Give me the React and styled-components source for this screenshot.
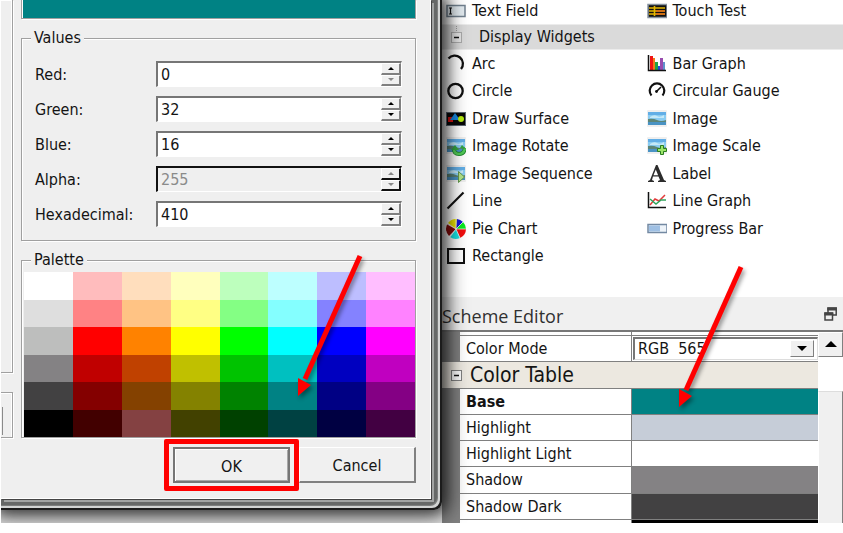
import React from "react";
import styled, { createGlobalStyle, css } from "styled-components";

const UI_FONT = '"DejaVu Sans Condensed", "Noto Sans", sans-serif';

const GlobalStyle = createGlobalStyle`
  *, *::before, *::after { box-sizing: border-box; }
  body { margin: 0; background: #fff; color: #141414; font: 16px/20px ${UI_FONT}; }
  button, input, select { font: inherit; color: inherit; border-radius: 0; }
`;

const Workspace = styled.main`
  display: grid;
  grid-template-columns: 441fr 401fr;
  margin-left: 1px;
  overflow: hidden;
  background: #e4e4e4;
`;

/* ---------- colour dialog ---------- */

const DialogFrame = styled.section`
  position: relative;
  z-index: 1;
  align-self: start;
  padding: 0 11px 11px 0;
  border-radius: 0 0 8px 0;
  background: #666867;
  box-shadow:
    inset -2px -2px #1c1c1c,
    inset -4px -4px #d2d4d3,
    inset -5px -5px #7c7e7d,
    0 0 20px 6px rgba(0, 0, 0, 0.6),
    0 0 14px 3px rgba(0, 0, 0, 0.45);
`;

const DialogBody = styled.form`
  display: grid;
  grid-template-columns: 12px 1fr;
  column-gap: 8px;
  padding: 0 14px 15px 0;
  background: #efefef;
  border-right: 1px solid #fff;
  border-bottom: 1px solid #fff;
  box-shadow: 1px 1px #444, 3px 3px #a2a4a3;
`;

const SideColumn = styled.div`
  display: flex;
  flex-direction: column;
  gap: 19px;
`;

const SideBox = styled.div`
  height: ${(p) => (p.$tall ? 373 : 46)}px;
  border: 1px solid #a0a0a0;
  border-left: 0;
  border-top-width: ${(p) => (p.$tall ? 0 : 1)}px;
  box-shadow: 1px 1px #fff, inset -1px 1px #fff;
  padding-top: 14px;
`;

const SideField = styled.div`
  width: 2px;
  height: 28px;
  border-right: 1px solid #8a8a8a;
`;

const DialogContent = styled.div`
  display: flex;
  flex-direction: column;
  gap: 9px;
`;

const Preview = styled.div`
  height: 19px;
  border: 1px solid #a0a0a0;
  border-top: 0;
  padding-left: 1px;
  background: #008284;
  box-shadow: inset 1px 0 #fff, 1px 1px #fff;
`;

const Group = styled.fieldset`
  min-width: 0;
  margin: 0;
  padding: ${(p) => (p.$flush ? "2px 0 0 2px" : "13px 13px 13px 13px")};
  border: 1px solid #a0a0a0;
  box-shadow: 1px 1px #fff, inset 1px 1px #fff;
`;

const GroupTitle = styled.legend`
  margin-left: ${(p) => (p.$flush ? 7 : -4)}px;
  padding: 0 3px;
  background: #efefef;
`;

const Fields = styled.div`
  display: grid;
  row-gap: 9px;
`;

const FieldRow = styled.div`
  display: grid;
  grid-template-columns: 121px 1fr;
  align-items: start;
  height: 26px;
`;

const FieldLabel = styled.label`
  padding-top: 1px;
  line-height: 26px;
`;

const SpinBox = styled.div`
  display: flex;
  height: 26px;
  border: 1px solid;
  border-width: 2px 1px 1px 2px;
  border-color: ${(p) => (p.$off ? "#111 #fff #fff #111" : "#767676 #fff #fff #767676")};
  background: ${(p) => (p.$off ? "#efefef" : "#fff")};
`;

const SpinInput = styled.input`
  flex: 1;
  min-width: 0;
  border: 0;
  padding: 1px 0 0 3px;
  background: transparent;
  outline: none;
  &:disabled { color: #8a8a8a; }
`;

const SpinButtons = styled.div`
  display: grid;
  grid-template-rows: 1fr 1fr;
  width: 20px;
`;

const bevel = css`
  border: 1px solid;
  border-color: #fff #808080 #808080 #fff;
  background: #f0f0f0;
`;

const SpinButton = styled.button`
  ${bevel}
  display: grid;
  place-items: center;
  min-height: 0;
  padding: 0;
  border-width: 1px 2px 2px 1px;
  border-right-color: ${(p) => (p.$off ? "#111" : "#808080")};
  border-bottom-color: ${(p) => (p.$off ? "#111" : "#808080")};
`;

const Swatches = styled.div`
  position: relative;
  display: grid;
  grid-template-columns: repeat(8, 1fr);
  grid-template-rows: repeat(6, 1fr);
  height: 165px;
`;

const Swatch = styled.button`
  min-height: 0;
  padding: 0;
  border: 0;
  background: ${(p) => p.$color};
`;

const Actions = styled.div`
  display: flex;
  justify-content: flex-end;
  gap: 9px;
`;

const ActionSlot = styled.div`
  position: relative;
  width: 117px;
`;

const PushButton = styled.button`
  ${bevel}
  width: 100%;
  height: 36px;
  padding: 3px 0 0;
  border-width: 1px 2px 2px 1px;
  ${(p) => p.$default && css`
    border: 2px solid #767676;
    box-shadow: inset 1px 1px #fff, inset -1px -1px #a8a8a8;
  `}
`;

const Callout = styled.span`
  position: absolute;
  inset: -8px -9px;
  border: 5px solid #f00;
  border-radius: 2px;
  pointer-events: none;
`;

const ArrowSvg = styled.svg`
  position: absolute;
  top: ${(p) => p.$top}px;
  right: ${(p) => p.$right}px;
  z-index: 2;
  overflow: visible;
  pointer-events: none;
  filter: drop-shadow(2px 3px 2px rgba(0, 0, 0, 0.4));
`;

const PointerArrow = ({ top, right }) => (
  <ArrowSvg $top={top} $right={right} width="64" height="142" viewBox="0 0 64 142" aria-hidden="true">
    <path d="M62 1 7 124" stroke="#f00" strokeWidth="5" />
    <path d="M0 123 13 130 0 141Z" fill="#f00" />
  </ArrowSvg>
);

/* ---------- right-hand panels ---------- */

const SidePane = styled.div`
  position: relative;
  min-width: 0;
  display: flex;
  flex-direction: column;
`;

const WidgetPanel = styled.section`
  height: 297px;
  background: #fff;
`;

const WidgetGrid = styled.div`
  display: grid;
  grid-template-columns: 1fr 1fr;
  grid-auto-rows: 1fr;
  height: ${(p) => p.$height}px;
`;

const WidgetItem = styled.button`
  display: flex;
  align-items: center;
  gap: 6px;
  min-width: 0;
  padding: 0 0 0 4px;
  border: 0;
  background: transparent;
  text-align: left;
  white-space: nowrap;
  svg { flex: none; }
`;

const SectionHeader = styled.button`
  display: flex;
  align-items: center;
  gap: 17px;
  width: 100%;
  height: 26px;
  margin-top: 3px;
  padding: 0 0 0 8px;
  border: 0;
  border-bottom: 1px solid #ececec;
  border-top: 1px solid #ececec;
  background: #dadada;
  text-align: left;
`;

const DockTitle = styled.header`
  display: flex;
  align-items: center;
  justify-content: space-between;
  height: 33px;
  padding: 5px 6px 0 0;
  background: #f0f0f0;
  color: #303030;
`;

const DockHeading = styled.h2`
  margin: 0;
  font: 400 18px/24px "Open Sans", sans-serif;
`;

const IconButton = styled.button`
  display: grid;
  padding: 0 0 4px;
  border: 0;
  background: none;
`;

const EditorBody = styled.div`
  display: flex;
  height: 193px;
  overflow: hidden;
  border-top: 2px solid #777;
  background: #fff;
`;

const PropertyTable = styled.table`
  flex: 1;
  min-width: 0;
  height: 193px;
  table-layout: fixed;
  border-spacing: 0;
  background: #fff;
`;

const GutterCol = styled.col`width: 17px;`;
const NameCol = styled.col`width: 172px;`;

const Row = styled.tr`height: ${(p) => p.$height || 26}px;`;

const Gutter = styled.td`
  padding: 0;
  background: #808080;
`;

const NameCell = styled.th`
  padding: 1px 0 0 6px;
  border-bottom: 1px solid #808080;
  border-left: 1px solid #808080;
  font-weight: ${(p) => (p.$bold ? 700 : 400)};
  text-align: left;
`;

const ValueCell = styled.td`
  padding: 0;
  border-bottom: 1px solid #808080;
  border-left: 1px solid #808080;
  background: ${(p) => p.$color || "#fff"};
`;

const CategoryCell = styled.th`
  padding: 0;
  border-bottom: 1px solid #808080;
  background: #ece8e0;
  font-weight: 400;
  text-align: left;
`;

const CategoryLabel = styled.div`
  display: flex;
  align-items: center;
  gap: 8px;
  padding-left: 8px;
  font-size: 21px;
  line-height: 24px;
`;

const Combo = styled.div`
  position: relative;
  display: flex;
  height: 23px;
  margin-left: 1px;
  border: 1px solid;
  border-width: 2px 1px 1px 2px;
  border-color: #767676 #ddd #ddd #767676;
`;

const ComboSelect = styled.select`
  flex: 1;
  min-width: 0;
  appearance: none;
  padding: 0 0 0 3px;
  border: 0;
  background: #fff;
  outline: none;
  white-space: pre;
`;

const ComboArrow = styled.span`
  ${bevel}
  position: absolute;
  top: 1px;
  right: 3px;
  display: grid;
  place-items: center;
  width: 24px;
  height: 17px;
  pointer-events: none;
`;

const Scrollbar = styled.div`
  display: flex;
  flex-direction: column;
  width: 25px;
  background: #fff;
`;

const ScrollButton = styled.button`
  ${bevel}
  display: grid;
  place-items: center;
  height: 25px;
  margin-bottom: 34px;
  padding: 0 0 2px;
`;

const ScrollThumb = styled.div`
  ${bevel}
  flex: 1;
  border-top-color: #ddd;
  border-bottom: 0;
`;

/* ---------- icons ---------- */

const Icon = ({ children }) => (
  <svg width="20" height="20" viewBox="0 0 20 20" fill="none" aria-hidden="true">{children}</svg>
);

const Landscape = () => (
  <>
    <rect x="0" y="1" width="20" height="17" rx="1" fill="#efefef" />
    <rect x="1" y="3" width="18" height="13" fill="#8accf2" />
    <path d="M1 3h18v3H1z" fill="#62aee6" />
    <path d="M3 8q4-3 7-1t7-1v3H3z" fill="#c5e8f7" />
    <path d="M1 10q5-1 9 1t9 0v3H1z" fill="#5d8577" />
    <path d="M1 13h18v3H1z" fill="#4a93c4" />
  </>
);

const icons = {
  textField: (
    <Icon>
      <rect x="1" y="4.500" width="18" height="11" fill="#e3ebf0" stroke="#71808e" strokeWidth="1.500" />
      <path d="M3 7h1l.5.5.5-.5h1M3 13h1l.5-.5.5.5h1M4.500 7v6" stroke="#111" strokeWidth="1.200" />
    </Icon>
  ),
  touchTest: (
    <Icon>
      <rect x="1" y="3.500" width="19" height="13" fill="#111" stroke="#8793a0" strokeWidth="1.500" />
      <path d="M2 7h16M2 10h16M2 13h16" stroke="#e6b800" strokeWidth="1.500" />
      <path d="M7.500 5v10" stroke="#e6b800" strokeWidth="1.600" />
      <path d="M9 10h9M9 13h9" stroke="#d8661a" strokeWidth="1.500" />
    </Icon>
  ),
  arc: <Icon><path d="M2.500 4.500A7.300 7.300 0 0 1 15 15" stroke="#111" strokeWidth="2.300" /></Icon>,
  circle: <Icon><circle cx="9.500" cy="10" r="7.200" stroke="#111" strokeWidth="2.300" /></Icon>,
  drawSurface: (
    <Icon>
      <rect x="0.500" y="3.500" width="19" height="13" fill="#080808" stroke="#5d6873" />
      <rect x="2" y="8" width="5" height="5" fill="#e01212" />
      <path d="M4 11 9 4l5 7z" fill="#168be4" />
      <circle cx="15" cy="10" r="3" fill="#b8ef12" />
    </Icon>
  ),
  image: <Icon><Landscape /></Icon>,
  imageRotate: (
    <Icon>
      <Landscape />
      <path d="M8 13q0 5 5 5t6-6" stroke="#1d832b" strokeWidth="4" />
      <path d="M8 13q0 5 5 5t6-6" stroke="#51c957" strokeWidth="2.500" />
      <path d="m5 14 4-5 4 5z" fill="#34a540" />
      <path d="m14 12 2-3 4 4z" fill="#34a540" />
    </Icon>
  ),
  imageSequence: (
    <Icon><Landscape /><path d="m12.500 7.500 6 5.500-6 5.500z" fill="#b4e58b" stroke="#63984b" /></Icon>
  ),
  imageScale: (
    <Icon>
      <Landscape />
      <path d="M13.500 9.500h3v3h3v3h-3v3h-3v-3h-3v-3h3z" fill="#9be568" stroke="#2b7c21" />
    </Icon>
  ),
  line: <Icon><path d="M1.500 17.500 17.500 1.500" stroke="#111" strokeWidth="2.200" /></Icon>,
  pie: (
    <Icon>
      <g transform="translate(10 10)">
        <path d="M0 0-8.700-5A10 10 0 0 0-7 7Z" fill="#8b0c0c" />
        <path d="M0 0-8-6A10 10 0 0 1 1-10Z" fill="#eee600" />
        <path d="M0 0 1-10A10 10 0 0 1 7-7Z" fill="#1616d8" />
        <path d="M0 0 7-7A10 10 0 0 1 10 0Z" fill="#0bea20" />
        <path d="M0 0H10A10 10 0 0 1 4 9Z" fill="#f20d0d" />
        <path d="M0 0 4 9A10 10 0 0 1-6 8Z" fill="#18e5e5" />
        <path d="M0 0V-10M0 0 7-7M0 0H10M0 0 4 9M0 0-6 8M0 0-9-5" stroke="#fff" strokeWidth="0.700" />
      </g>
    </Icon>
  ),
  rectangle: <Icon><rect x="2" y="3" width="16" height="14" stroke="#111" strokeWidth="2" /></Icon>,
  barGraph: (
    <Icon>
      <path d="M3 2h3v15H3z" fill="#f01414" />
      <path d="M6 4h2v13H6z" fill="#f27c18" />
      <path d="M8 8h3v9H8z" fill="#21a345" />
      <path d="M11 12h2v5h-2z" fill="#2446d8" />
      <path d="M13 4h3v13h-3z" fill="#984cae" />
      <path d="M16 8h2v9h-2z" fill="#5f92cc" />
      <path d="M1.500 1v15.500h17.500" stroke="#111" strokeWidth="1.500" />
    </Icon>
  ),
  gauge: (
    <Icon>
      <path d="M4.500 14.500A7.300 7.300 0 1 1 15.500 14.500" stroke="#111" strokeWidth="2.200" />
      <path d="m9 11 5-5" stroke="#111" strokeWidth="1.600" />
      <circle cx="9.500" cy="10.500" r="1.400" fill="#111" />
    </Icon>
  ),
  label: (
    <Icon>
      <path d="M10.500 1 17 16l2 1v1h-8v-1l2-1-1.500-3.500H6L5 16l2 1v1H1v-1l2-1L9 1ZM8.800 5.500 6.500 11.300h4.600Z" fill="#2c2c2c" fillRule="evenodd" />
    </Icon>
  ),
  lineGraph: (
    <Icon>
      <path d="m3 14 5-6 4 2 6-6" stroke="#e23b3b" strokeWidth="1.500" />
      <path d="m3 8 6 5 5-4h5" stroke="#31a35c" strokeWidth="1.500" />
      <path d="M1.500 1v15.500h17.500" stroke="#111" strokeWidth="1.500" />
    </Icon>
  ),
  progress: (
    <Icon>
      <rect x="1" y="5.500" width="19" height="8" fill="#edf3f9" stroke="#7389a2" strokeWidth="1.500" />
      <path d="M2 6.500h11v6H2z" fill="#9fc0e4" />
    </Icon>
  ),
};

const Collapse = ({ dotted }) => (
  <svg width="12" height="24" viewBox="0 0 12 24" fill="none" aria-hidden="true">
    {dotted && <path d="M6.500 1v5" stroke="#999" strokeDasharray="1 1" />}
    <rect x="1.500" y="7.500" width="10" height="10" fill={dotted ? "#e4e4e4" : "#fafafa"} stroke={dotted ? "#aaa" : "#808080"} />
    <path d="M4 12.500h5" stroke="#111" strokeWidth="1.500" />
  </svg>
);

const Triangle = ({ size = 4, down, muted }) => (
  <svg width={size * 2} height={size} viewBox="0 0 8 4" aria-hidden="true">
    <path d={down ? "M0 0h8L4 4z" : "M0 4h8L4 0z"} fill={muted ? "#888" : "#000"} />
  </svg>
);

const FloatIcon = () => (
  <svg width="13" height="14" viewBox="0 0 13 14" fill="#f0f0f0" stroke="#444" strokeWidth="1.500" aria-hidden="true">
    <path d="M4 1h8.200v7H4z" /><path d="M3.300 2h9.600" strokeWidth="3" />
    <path d="M1 6h7.500v7H1z" /><path d="M.3 7h9" strokeWidth="3" />
  </svg>
);

/* ---------- data ---------- */

const fields = [
  { id: "red", label: "Red:", value: "0", atMin: true },
  { id: "green", label: "Green:", value: "32" },
  { id: "blue", label: "Blue:", value: "16" },
  { id: "alpha", label: "Alpha:", value: "255", off: true },
  { id: "hex", label: "Hexadecimal:", value: "410" },
];

const palette = [
  "#ffffff", "#ffbcbd", "#ffdebd", "#ffffbd", "#bdffbd", "#bdffff", "#bdbeff", "#ffbeff",
  "#dedede", "#ff8284", "#ffc384", "#ffff84", "#84ff84", "#84ffff", "#8482ff", "#ff82ff",
  "#bdbebd", "#ff0000", "#ff8200", "#ffff00", "#00ff00", "#00ffff", "#0000ff", "#ff00ff",
  "#848284", "#c00000", "#c04100", "#c0c000", "#00c300", "#00c0c0", "#0000c0", "#c000c0",
  "#424142", "#840000", "#844100", "#848200", "#008200", "#008284", "#000084", "#840084",
  "#000000", "#420000", "#844142", "#424100", "#004100", "#004142", "#000042", "#420042",
];

const inputWidgets = [["textField", "Text Field"], ["touchTest", "Touch Test"]];

const displayWidgets = [
  ["arc", "Arc"], ["barGraph", "Bar Graph"],
  ["circle", "Circle"], ["gauge", "Circular Gauge"],
  ["drawSurface", "Draw Surface"], ["image", "Image"],
  ["imageRotate", "Image Rotate"], ["imageScale", "Image Scale"],
  ["imageSequence", "Image Sequence"], ["label", "Label"],
  ["line", "Line"], ["lineGraph", "Line Graph"],
  ["pie", "Pie Chart"], ["progress", "Progress Bar"],
  ["rectangle", "Rectangle"],
];

const scheme = [
  { name: "Base", color: "#008284", bold: true },
  { name: "Highlight", color: "#c6cdd8" },
  { name: "Highlight Light", color: "#ffffff" },
  { name: "Shadow", color: "#848284" },
  { name: "Shadow Dark", color: "#424142" },
];

const WidgetList = ({ items, height }) => (
  <WidgetGrid $height={height}>
    {items.map(([icon, name]) => (
      <WidgetItem key={name} type="button">{icons[icon]}{name}</WidgetItem>
    ))}
  </WidgetGrid>
);

function ColorDialog() {
  return (
    <DialogFrame aria-label="Color">
      <DialogBody onSubmit={(e) => e.preventDefault()}>
        <SideColumn>
          <SideBox $tall />
          <SideBox><SideField /></SideBox>
        </SideColumn>
        <DialogContent>
          <Preview />
          <Group>
            <GroupTitle>Values</GroupTitle>
            <Fields>
              {fields.map((f) => (
                <FieldRow key={f.id}>
                  <FieldLabel htmlFor={f.id}>{f.label}</FieldLabel>
                  <SpinBox $off={f.off}>
                    <SpinInput id={f.id} defaultValue={f.value} disabled={f.off} />
                    <SpinButtons>
                      <SpinButton type="button" $off={f.off} disabled={f.off} aria-label="Increase">
                        <Triangle size={3} muted={f.off} />
                      </SpinButton>
                      <SpinButton type="button" $off={f.off} disabled={f.off} aria-label="Decrease">
                        <Triangle size={3} down muted={f.off || f.atMin} />
                      </SpinButton>
                    </SpinButtons>
                  </SpinBox>
                </FieldRow>
              ))}
            </Fields>
          </Group>
          <Group $flush>
            <GroupTitle $flush>Palette</GroupTitle>
            <Swatches>
              {palette.map((c) => <Swatch key={c} type="button" $color={c} aria-label={c} />)}
              <PointerArrow top={-17} right={53} />
            </Swatches>
          </Group>
          <Actions>
            <ActionSlot><PushButton $default>OK</PushButton><Callout /></ActionSlot>
            <ActionSlot><PushButton type="button">Cancel</PushButton></ActionSlot>
          </Actions>
        </DialogContent>
      </DialogBody>
    </DialogFrame>
  );
}

function SchemeEditor() {
  return (
    <section>
      <DockTitle>
        <DockHeading>Scheme Editor</DockHeading>
        <IconButton type="button" aria-label="Float panel"><FloatIcon /></IconButton>
      </DockTitle>
      <EditorBody>
        <PropertyTable>
          <colgroup><GutterCol /><NameCol /><col /></colgroup>
          <tbody>
            <Row $height={4}><Gutter /><NameCell /><ValueCell /></Row>
            <Row>
              <Gutter />
              <NameCell scope="row"><label htmlFor="mode">Color Mode</label></NameCell>
              <ValueCell>
                <Combo>
                  <ComboSelect id="mode" defaultValue="565">
                    <option value="565">{"RGB\u00a0\u00a0565"}</option>
                  </ComboSelect>
                  <ComboArrow><Triangle size={5} down /></ComboArrow>
                </Combo>
              </ValueCell>
            </Row>
            <Row>
              <CategoryCell colSpan={3} scope="rowgroup">
                <CategoryLabel><Collapse />Color Table</CategoryLabel>
              </CategoryCell>
            </Row>
            {scheme.map((s) => (
              <Row key={s.name}>
                <Gutter />
                <NameCell scope="row" $bold={s.bold}>{s.name}</NameCell>
                <ValueCell $color={s.color} />
              </Row>
            ))}
            <Row $height={5}><Gutter /><NameCell /><ValueCell $color="#000" /></Row>
          </tbody>
        </PropertyTable>
        <Scrollbar>
          <ScrollButton type="button" aria-label="Scroll up"><Triangle size={6} /></ScrollButton>
          <ScrollThumb />
        </Scrollbar>
      </EditorBody>
    </section>
  );
}

export default function App() {
  return (
    <>
      <GlobalStyle />
      <Workspace>
        <ColorDialog />
        <SidePane>
          <WidgetPanel aria-label="Widgets">
            <WidgetList items={inputWidgets} height={21} />
            <SectionHeader type="button"><Collapse dotted />Display Widgets</SectionHeader>
            <WidgetList items={displayWidgets} height={220} />
          </WidgetPanel>
          <SchemeEditor />
          <PointerArrow top={266} right={100} />
        </SidePane>
      </Workspace>
    </>
  );
}
